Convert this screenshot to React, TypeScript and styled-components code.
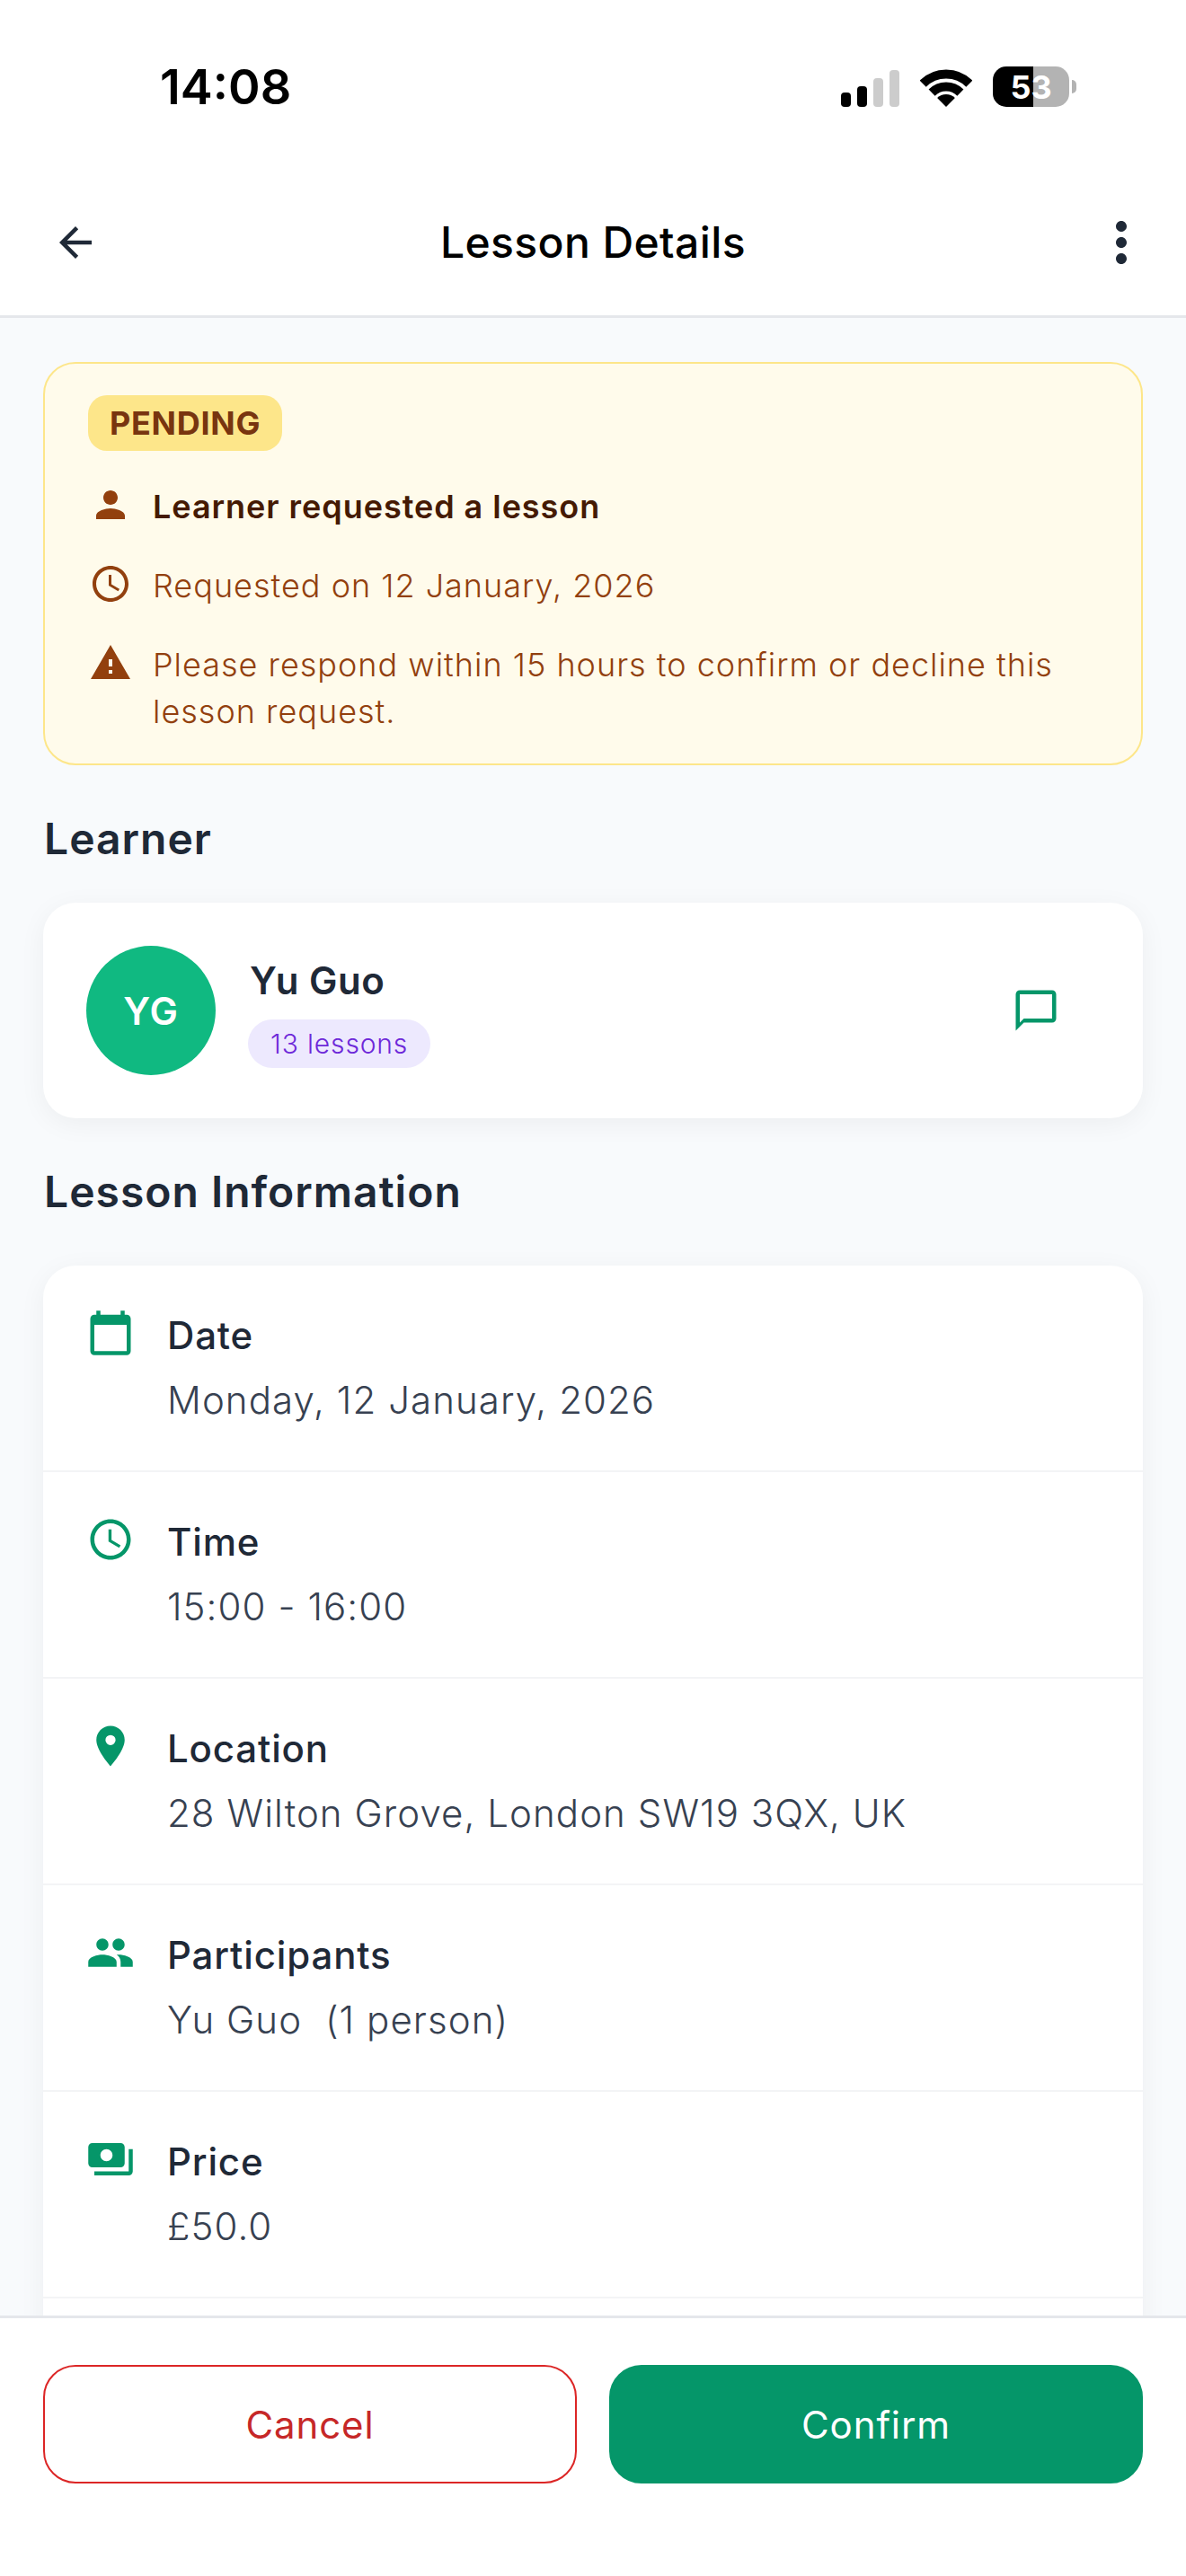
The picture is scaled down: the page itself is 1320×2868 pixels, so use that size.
import styled, { createGlobalStyle } from 'styled-components';
import {
  MdAccessTime,
  MdArrowBack,
  MdCalendarToday,
  MdLocationOn,
  MdMoreVert,
  MdOutlineChatBubbleOutline,
  MdPayments,
  MdPeople,
  MdPerson,
  MdWarning,
} from 'react-icons/md';
import type { IconType } from 'react-icons';

const GlobalStyle = createGlobalStyle`
  * {
    box-sizing: border-box;
  }

  html,
  body {
    margin: 0;
    padding: 0;
    background: #ffffff;
  }

  body {
    font-family: 'Inter', 'Noto Sans', sans-serif;
  }
`;

const Screen = styled.div`
  width: 1320px;
  height: 2868px;
  display: flex;
  flex-direction: column;
  overflow: hidden;
  background: #ffffff;
`;

const StatusBar = styled.div`
  height: 186px;
  flex-shrink: 0;
  display: flex;
  justify-content: space-between;
  align-items: flex-start;
  padding: 74px 122px 0 178px;
`;

const Clock = styled.span`
  font-size: 54px;
  line-height: 46px;
  font-weight: 600;
  color: #000000;
`;

const StatusIcons = styled.div`
  display: flex;
  align-items: flex-end;
  gap: 23px;
  height: 45px;
`;

const Battery = styled.div<{ $level: number }>`
  position: relative;
  width: 85px;
  height: 45px;
  margin-right: 8px;
  border-radius: 15px;
  display: flex;
  align-items: center;
  justify-content: center;
  font-size: 36px;
  font-weight: 700;
  color: #ffffff;
  background: linear-gradient(
    to right,
    #000000 ${({ $level }) => $level}%,
    #b3b3b3 ${({ $level }) => $level}%
  );

  &::after {
    content: '';
    position: absolute;
    left: 88px;
    top: 15px;
    width: 5px;
    height: 15px;
    border-radius: 0 5px 5px 0;
    background: #b3b3b3;
  }
`;

const Header = styled.header`
  height: 168px;
  flex-shrink: 0;
  display: flex;
  align-items: center;
  justify-content: space-between;
  padding: 3px 33px 0;
  border-bottom: 3px solid #e5e7eb;
`;

const HeaderTitle = styled.h1`
  margin: 0;
  font-size: 48px;
  line-height: 60px;
  font-weight: 550;
  letter-spacing: 0.4px;
  color: #000000;
`;

const HeaderIcon = styled.span`
  display: flex;
  width: 78px;
  justify-content: center;
`;

const BackIcon = styled(HeaderIcon)`
  justify-content: flex-start;
  padding-left: 24px;
`;

const Content = styled.main`
  flex: 1;
  min-height: 0;
  overflow: hidden;
  padding: 49px 48px 0;
  background: #f8fafc;
`;

const Alert = styled.section`
  display: flex;
  flex-direction: column;
  align-items: flex-start;
  gap: 36px;
  padding: 35px 49px 32px;
  margin-bottom: 53px;
  border: 2px solid #fde68a;
  border-radius: 36px;
  background: #fffbeb;
`;

const StatusBadge = styled.span`
  height: 62px;
  padding: 0 24px;
  margin-left: -1px;
  display: flex;
  align-items: center;
  border-radius: 21px;
  background: #fde68a;
  color: #78350f;
  font-size: 36px;
  font-weight: 650;
  letter-spacing: 0.7px;
`;

const AlertRow = styled.div`
  display: flex;
  align-items: flex-start;
  gap: 23px;
  color: #92400e;
`;

const AlertText = styled.span<{ $strong?: boolean }>`
  font-size: 36px;
  line-height: 52px;
  letter-spacing: ${({ $strong }) => ($strong ? 0.95 : 1)}px;
  font-weight: ${({ $strong }) => ($strong ? 600 : 350)};
  color: ${({ $strong }) => ($strong ? '#451a03' : '#92400e')};
`;

const SectionTitle = styled.h2<{ $gap: number }>`
  margin: 0 0 ${({ $gap }) => $gap}px 1px;
  font-size: 48px;
  line-height: 58px;
  font-weight: 600;
  letter-spacing: 1px;
  color: #1f2937;
`;

const Card = styled.section`
  background: #ffffff;
  border-radius: 36px;
  box-shadow: 0 6px 30px rgba(0, 0, 0, 0.05);
`;

const LearnerCard = styled(Card)`
  height: 240px;
  margin-bottom: 53px;
  padding: 0 92px 0 48px;
  display: flex;
  align-items: center;
  gap: 36px;
`;

const Avatar = styled.div`
  width: 144px;
  height: 144px;
  flex-shrink: 0;
  border-radius: 50%;
  display: flex;
  align-items: center;
  justify-content: center;
  background: #10b981;
  color: #ffffff;
  font-size: 42px;
  font-weight: 600;
  letter-spacing: 1px;
`;

const LearnerInfo = styled.div`
  flex: 1;
  display: flex;
  flex-direction: column;
  align-items: flex-start;
  gap: 15px;
  padding-top: 2px;
`;

const LearnerName = styled.span`
  margin-left: 2px;
  font-size: 42px;
  line-height: 56px;
  font-weight: 600;
  letter-spacing: 0.5px;
  color: #1f2937;
`;

const LessonCount = styled.span`
  height: 54px;
  padding: 0 25px;
  display: flex;
  align-items: center;
  border-radius: 27px;
  background: #ede9fe;
  color: #6d28d9;
  font-size: 30px;
  font-weight: 350;
  letter-spacing: 0.85px;
`;

const InfoCard = styled(Card)`
  padding-bottom: 80px;
`;

const InfoRow = styled.div`
  display: flex;
  align-items: flex-start;
  gap: 36px;
  padding: 48px;
  border-bottom: 2px solid #f3f4f6;
`;

const InfoBody = styled.div`
  display: flex;
  flex-direction: column;
  gap: 12px;
`;

const InfoLabel = styled.span`
  font-size: 42px;
  line-height: 60px;
  font-weight: 450;
  letter-spacing: 0.85px;
  color: #1f2937;
`;

const InfoValue = styled.span`
  font-size: 42px;
  line-height: 60px;
  font-weight: 350;
  letter-spacing: 1.07px;
  color: #374151;
  white-space: pre;
`;

const Footer = styled.footer`
  height: 290px;
  flex-shrink: 0;
  padding: 52px 48px 0;
  display: flex;
  align-items: flex-start;
  gap: 36px;
  background: #ffffff;
  border-top: 3px solid #e5e7eb;
`;

const ActionButton = styled.button<{ $variant: 'cancel' | 'confirm' }>`
  flex: 1;
  height: 132px;
  border-radius: 36px;
  font-family: inherit;
  font-size: 42px;
  font-weight: 400;
  letter-spacing: 0.9px;
  border: 2px solid ${({ $variant }) => ($variant === 'cancel' ? '#dc2626' : '#059669')};
  background: ${({ $variant }) => ($variant === 'cancel' ? '#ffffff' : '#059669')};
  color: ${({ $variant }) => ($variant === 'cancel' ? '#c62828' : '#ffffff')};
`;

const SignalIcon = () => (
  <svg width="65" height="41" viewBox="0 0 65 41">
    <rect x="0" y="25" width="11" height="16" rx="4" fill="#000" />
    <rect x="18" y="18" width="11" height="23" rx="4" fill="#000" />
    <rect x="36" y="9" width="11" height="32" rx="4" fill="#ccc" />
    <rect x="54" y="0" width="11" height="41" rx="4" fill="#ccc" />
  </svg>
);

const WifiIcon = () => (
  <svg width="58" height="42" viewBox="0 0 58 42">
    <path d="M3.2 16.2A36.5 36.5 0 0 1 54.8 16.2" fill="none" stroke="#000" strokeWidth="10" />
    <path d="M13.1 26.1A22.5 22.5 0 0 1 44.9 26.1" fill="none" stroke="#000" strokeWidth="10" />
    <path d="M29 42L19.1 32.1A14 14 0 0 1 38.9 32.1Z" fill="#000" />
  </svg>
);

const details: { icon: IconType; label: string; value: string }[] = [
  { icon: MdCalendarToday, label: 'Date', value: 'Monday, 12 January, 2026' },
  { icon: MdAccessTime, label: 'Time', value: '15:00 - 16:00' },
  { icon: MdLocationOn, label: 'Location', value: '28 Wilton Grove, London SW19 3QX, UK' },
  { icon: MdPeople, label: 'Participants', value: 'Yu Guo  (1 person)' },
  { icon: MdPayments, label: 'Price', value: '£50.0' },
];

const App = () => {
  return (
    <Screen>
      <GlobalStyle />
      <StatusBar>
        <Clock>14:08</Clock>
        <StatusIcons>
          <SignalIcon />
          <WifiIcon />
          <Battery $level={53}>53</Battery>
        </StatusIcons>
      </StatusBar>

      <Header>
        <BackIcon>
          <MdArrowBack size={54} color="#1f2937" style={{ flexShrink: 0 }} />
        </BackIcon>
        <HeaderTitle>Lesson Details</HeaderTitle>
        <HeaderIcon>
          <MdMoreVert size={72} color="#1f2937" />
        </HeaderIcon>
      </Header>

      <Content>
        <Alert>
          <StatusBadge>PENDING</StatusBadge>
          <AlertRow>
            <MdPerson size={48} style={{ flexShrink: 0 }} />
            <AlertText $strong>Learner requested a lesson</AlertText>
          </AlertRow>
          <AlertRow>
            <MdAccessTime size={48} style={{ flexShrink: 0 }} />
            <AlertText>Requested on 12 January, 2026</AlertText>
          </AlertRow>
          <AlertRow>
            <MdWarning size={48} style={{ flexShrink: 0 }} />
            <AlertText>Please respond within 15 hours to confirm or decline this lesson request.</AlertText>
          </AlertRow>
        </Alert>

        <SectionTitle $gap={42}>Learner</SectionTitle>
        <LearnerCard>
          <Avatar>YG</Avatar>
          <LearnerInfo>
            <LearnerName>Yu Guo</LearnerName>
            <LessonCount>13 lessons</LessonCount>
          </LearnerInfo>
          <MdOutlineChatBubbleOutline size={54} color="#059669" />
        </LearnerCard>

        <SectionTitle $gap={53}>Lesson Information</SectionTitle>
        <InfoCard>
          {details.map(({ icon: Icon, label, value }) => (
            <InfoRow key={label}>
              <Icon size={54} color="#059669" style={{ flexShrink: 0 }} />
              <InfoBody>
                <InfoLabel>{label}</InfoLabel>
                <InfoValue>{value}</InfoValue>
              </InfoBody>
            </InfoRow>
          ))}
        </InfoCard>
      </Content>

      <Footer>
        <ActionButton $variant="cancel">Cancel</ActionButton>
        <ActionButton $variant="confirm">Confirm</ActionButton>
      </Footer>
    </Screen>
  );
};

export default App;
